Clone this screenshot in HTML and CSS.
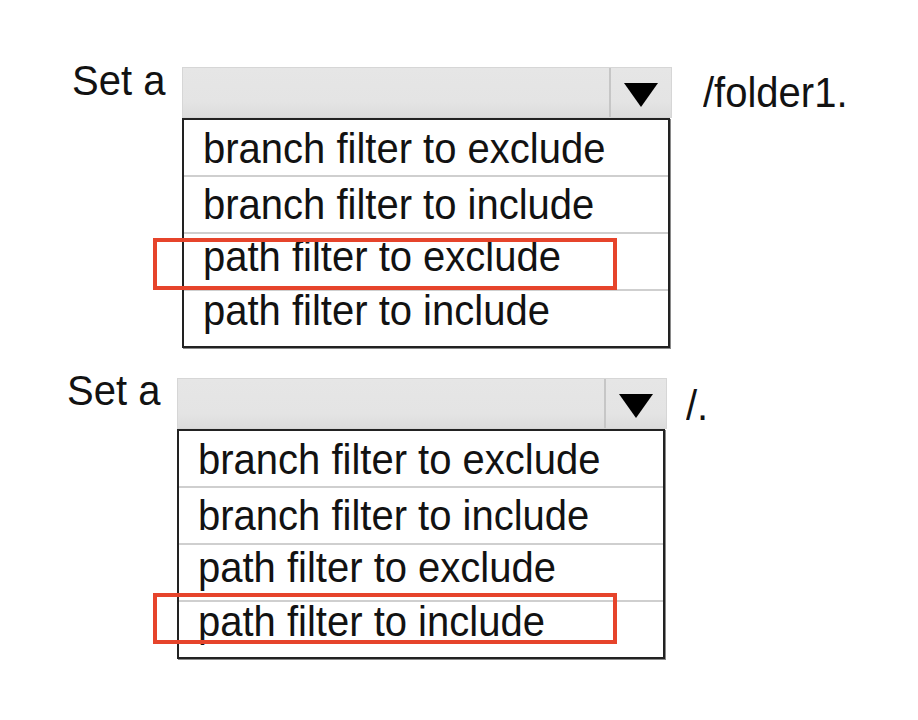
FILE: index.html
```html
<!DOCTYPE html>
<html lang="en">
<head>
<meta charset="utf-8">
<title>Filter selection</title>
<link rel="stylesheet" href="styles.css">
</head>
<body>
<div class="page">
  <div class="question question--first">
    <div class="label"><span class="txt">Set a</span></div>
    <div class="dropdown">
      <div class="bar">
        <div class="bar-field"></div>
        <div class="bar-button">
          <svg class="arrow" width="34" height="24" viewBox="0 0 34 24"><polygon points="0,0 34,0 17,24" fill="#000"/></svg>
        </div>
      </div>
      <div class="list">
        <div class="option"><span class="txt">branch filter to exclude</span></div>
        <div class="option"><span class="txt">branch filter to include</span></div>
        <div class="option"><span class="txt">path filter to exclude</span></div>
        <div class="option"><span class="txt">path filter to include</span></div>
        <span class="highlight highlight--first"></span>
      </div>
    </div>
    <div class="suffix"><span class="txt">/folder1.</span></div>
  </div>

  <div class="question question--second">
    <div class="label"><span class="txt">Set a</span></div>
    <div class="dropdown">
      <div class="bar">
        <div class="bar-field"></div>
        <div class="bar-button">
          <svg class="arrow" width="34" height="24" viewBox="0 0 34 24"><polygon points="0,0 34,0 17,24" fill="#000"/></svg>
        </div>
      </div>
      <div class="list">
        <div class="option"><span class="txt">branch filter to exclude</span></div>
        <div class="option"><span class="txt">branch filter to include</span></div>
        <div class="option"><span class="txt">path filter to exclude</span></div>
        <div class="option"><span class="txt">path filter to include</span></div>
        <span class="highlight highlight--second"></span>
      </div>
    </div>
    <div class="suffix"><span class="txt">/.</span></div>
  </div>
</div>
</body>
</html>
```

FILE: styles.css
```css
html, body {
  margin: 0;
  padding: 0;
  background: #ffffff;
}

body {
  font-family: "Liberation Sans", Arial, sans-serif;
  font-size: 40px;
  color: #121212;
  width: 918px;
  height: 720px;
  overflow: hidden;
}

.page {
  display: flex;
  flex-direction: column;
}

.txt {
  display: inline-block;
  transform: scaleY(1.07);
  transform-origin: 50% 78%;
}

.question {
  display: flex;
  align-items: flex-start;
}

.question--first {
  margin-top: 58px;
  padding-left: 72px;
}

.question--second {
  margin-top: 20px;
  padding-left: 67px;
}

.label {
  width: 110px;
  line-height: 46px;
  white-space: nowrap;
}

.dropdown {
  width: 490px;
  margin-top: 9px;
  display: flex;
  flex-direction: column;
}

.question--second .dropdown {
  margin-top: 10px;
}

.bar {
  height: 51px;
  display: flex;
  box-sizing: border-box;
  border: 1px solid #d6d6d6;
  background: linear-gradient(#e6e6e6 0%, #e4e4e4 70%, #dcdcdc 100%);
}

.bar-field {
  flex: 1;
}

.bar-button {
  width: 62px;
  border-left: 2px solid #c6c6c6;
  display: flex;
  justify-content: center;
  padding-top: 15px;
  box-sizing: border-box;
}

.arrow {
  display: block;
}

.list {
  position: relative;
  width: 488px;
  box-sizing: border-box;
  border: 2px solid #222222;
  box-shadow: 1px 1px 0 #8a8a8a;
  background: #ffffff;
}

.option {
  height: 57px;
  box-sizing: border-box;
  border-bottom: 2px solid #cfcfcf;
  padding-left: 19px;
  display: flex;
  align-items: center;
  line-height: 46px;
  white-space: nowrap;
}

.option:last-of-type {
  border-bottom: none;
  height: 55px;
}

.option:nth-of-type(1) {
  padding-top: 3px;
}

.option:nth-of-type(3) {
  padding-bottom: 10px;
}

.option:nth-of-type(4) {
  padding-bottom: 16px;
}

.highlight {
  position: absolute;
  width: 464px;
  height: 52px;
  box-sizing: border-box;
  border: 4px solid #e6442b;
}

.highlight--first {
  left: -31px;
  top: 118px;
}

.highlight--second {
  left: -26px;
  top: 162px;
  height: 51px;
}

.suffix {
  line-height: 46px;
  white-space: nowrap;
}

.question--first .suffix {
  margin-left: 31px;
  margin-top: 12px;
}

.question--second .suffix {
  margin-left: 19px;
  margin-top: 15px;
}
```
